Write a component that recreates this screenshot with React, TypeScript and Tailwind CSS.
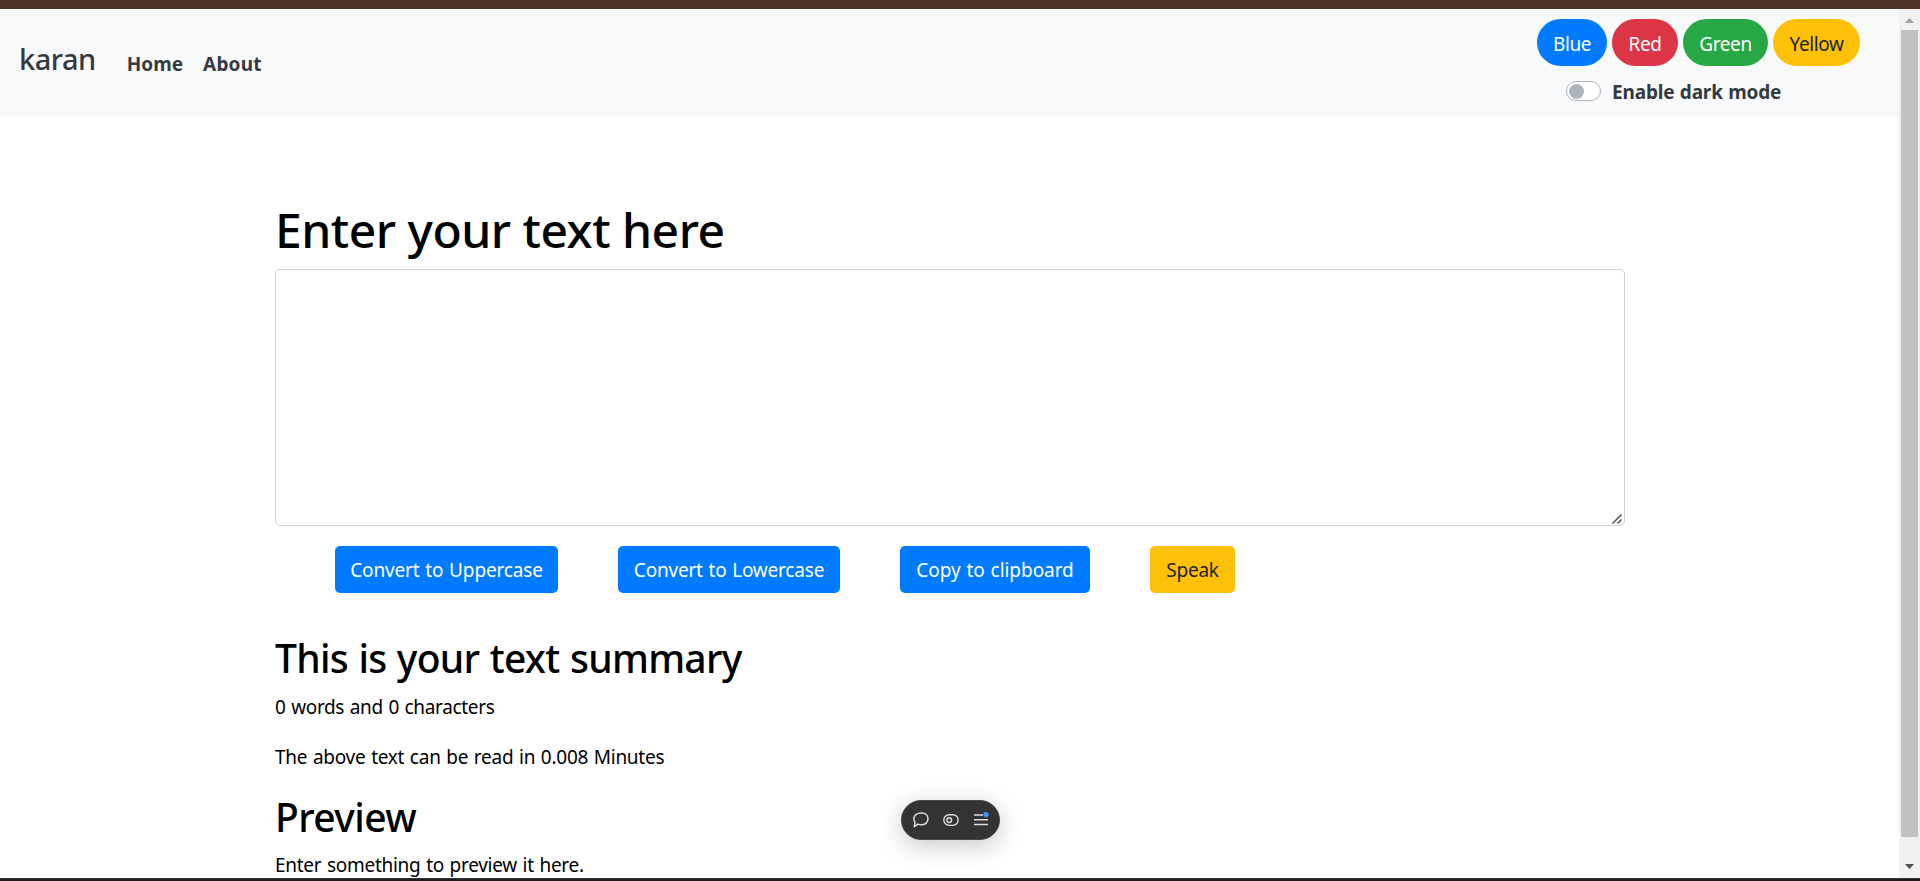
import React, { useState } from "react";

const swatches = [
  { label: "Blue", cls: "w-[70px] bg-[#007bff] text-white" },
  { label: "Red", cls: "ml-[5px] w-[66px] bg-[#dc3545] text-white" },
  { label: "Green", cls: "ml-[5px] w-[85px] bg-[#28a745] text-white" },
  { label: "Yellow", cls: "ml-[5px] w-[87px] bg-[#ffc107] text-[#212529]" },
];

const actions = [
  { label: "Convert to Uppercase", cls: "w-[223px] bg-[#007bff] text-white tracking-[-0.15px]" },
  { label: "Convert to Lowercase", cls: "w-[222px] bg-[#007bff] text-white tracking-[-0.2px]" },
  { label: "Copy to clipboard", cls: "w-[190px] bg-[#007bff] text-white tracking-[-0.05px]" },
  { label: "Speak", cls: "w-[85px] bg-[#ffc107] text-[#212529] tracking-[-0.2px]" },
];

function Navbar() {
  return (
    <nav className="flex h-[107px] shrink-0 items-start bg-[#f8f9fa] text-[#343a40]">
      <a className="ml-[19px] mt-[30px] text-[29px] font-medium leading-10 tracking-[-0.5px]">karan</a>
      <a className="ml-[31px] mt-10 text-[19px] font-bold leading-[30px]">Home</a>
      <a className="ml-5 mt-10 text-[19px] font-bold leading-[30px] tracking-[0.2px]">About</a>
      <div className="ml-auto mr-[39px] flex w-[323px] flex-col">
        <div className="mt-2.5 flex">
          {swatches.map((s) => (
            <button key={s.label} className={`h-[47px] whitespace-nowrap rounded-[24px] pt-1 text-[19px] tracking-[-0.4px] ${s.cls}`}>
              {s.label}
            </button>
          ))}
        </div>
        <label className="ml-[29px] mt-[11px] flex h-[30px] items-center">
          <span className="mb-0.5 flex h-5 w-[35px] items-center rounded-full border border-[#adb5bd] bg-white pl-0.5">
            <span className="size-[15px] rounded-full bg-[#adb5bd]" />
          </span>
          <span className="ml-[11px] whitespace-nowrap text-[19px] font-bold leading-[30px] tracking-[-0.15px] [word-spacing:0.5px]">Enable dark mode</span>
        </label>
      </div>
    </nav>
  );
}

function Toolbar() {
  return (
    <div className="absolute left-[901px] top-[800px] flex h-10 w-[99px] items-center rounded-full border border-[#484848] bg-[#333] shadow-[0_6px_24px_rgba(0,0,0,0.22)]">
      <svg className="ml-2.5 size-[18px]" viewBox="0 0 18 18" fill="none" stroke="#dedede" strokeWidth="1.5" strokeLinejoin="round">
        <path d="M9.4 2C13.2 2 16 4.4 16 7.8S13.2 13.8 9.4 13.8C8.2 13.8 7 13.6 6 13.1L2.3 15.7L3 11.1C2.1 10 1.8 8.8 1.8 7.8C1.8 4.4 5 2 9.4 2Z" />
      </svg>
      <svg className="ml-3 size-[18px]" viewBox="0 0 18 18" fill="none" stroke="#dedede" strokeWidth="1.4">
        <rect x="1.8" y="3.8" width="14.4" height="10.6" rx="5.3" />
        <circle cx="7.2" cy="9.1" r="2.4" />
      </svg>
      <svg className="ml-[13px] size-[18px]" viewBox="0 0 18 18" fill="none" stroke="#dedede" strokeWidth="1.5">
        <path d="M1 4h9M1 8.7h14M1 13.4h14" />
        <circle cx="13" cy="3.6" r="2.6" fill="#3b99fc" stroke="none" />
      </svg>
    </div>
  );
}

export default function App() {
  const [text, setText] = useState("");
  return (
    <div className="relative flex h-[881px] w-[1920px] flex-col overflow-hidden bg-white font-['Noto_Sans','Open_Sans',sans-serif] text-black">
      <div className="h-[9px] shrink-0 bg-[#4e3424]" />
      <div className="flex h-[869px]">
        <div className="flex w-[1899px] flex-col overflow-hidden">
          <Navbar />
          <main className="ml-[275px] mt-[84px] flex w-[1350px] flex-col">
            <h1 className="h-[69px] whitespace-nowrap text-[48px] font-[550] leading-[60px] tracking-[-0.5px]">Enter your text here</h1>
            <div className="relative h-[257px]">
              <textarea
                value={text}
                onChange={(e) => setText(e.target.value)}
                className="block h-full w-full resize-none rounded-[5px] border border-[#ced4da] bg-white p-2"
              />
              <svg className="absolute bottom-0.5 right-[3px] h-2.5 w-2.5" viewBox="0 0 10 10" stroke="#4d4d4d" strokeWidth="1.5">
                <path d="M0.5 9.5L9.5 0.5M5.5 9.5L9.5 5.5" />
              </svg>
            </div>
            <div className="mt-5 flex gap-[60px] pl-[60px]">
              {actions.map((a) => (
                <button key={a.label} className={`h-[47px] whitespace-nowrap rounded-[5px] pt-0.5 text-[19px] [word-spacing:1px] ${a.cls}`}>
                  {a.label}
                </button>
              ))}
            </div>
            <h2 className="mt-10 whitespace-nowrap text-[39px] font-[550] leading-[50px] tracking-[-0.72px] [word-spacing:1px]">This is your text summary</h2>
            <p className="mt-[9px] text-[19px] leading-[30px] tracking-[-0.34px] [word-spacing:1px]">0 words and 0 characters</p>
            <p className="mt-5 text-[19px] leading-[30px] tracking-[-0.26px] [word-spacing:1px]">The above text can be read in 0.008 Minutes</p>
            <h2 className="mt-5 text-[39px] font-[550] leading-[50px] tracking-[-0.6px]">Preview</h2>
            <p className="mt-2 text-[19px] leading-[30px] tracking-[-0.28px] [word-spacing:1px]">Enter something to preview it here.</p>
          </main>
        </div>
        <div className="flex w-[21px] flex-col items-center bg-[#f1f1f1]">
          <svg className="h-[21px] w-[21px] shrink-0" viewBox="0 0 21 21"><path d="M6 14L10.5 9L15 14Z" fill="#a3a3a3" /></svg>
          <div className="h-[807px] w-[17px] bg-[#c1c1c1]" />
          <svg className="mt-5 h-[21px] w-[21px] shrink-0" viewBox="0 0 21 21"><path d="M6 7L10.5 12L15 7Z" fill="#505050" /></svg>
        </div>
      </div>
      <div className="h-[3px] shrink-0 border-t border-[#383838] bg-[#1c1a1b]" />
      <Toolbar />
    </div>
  );
}
